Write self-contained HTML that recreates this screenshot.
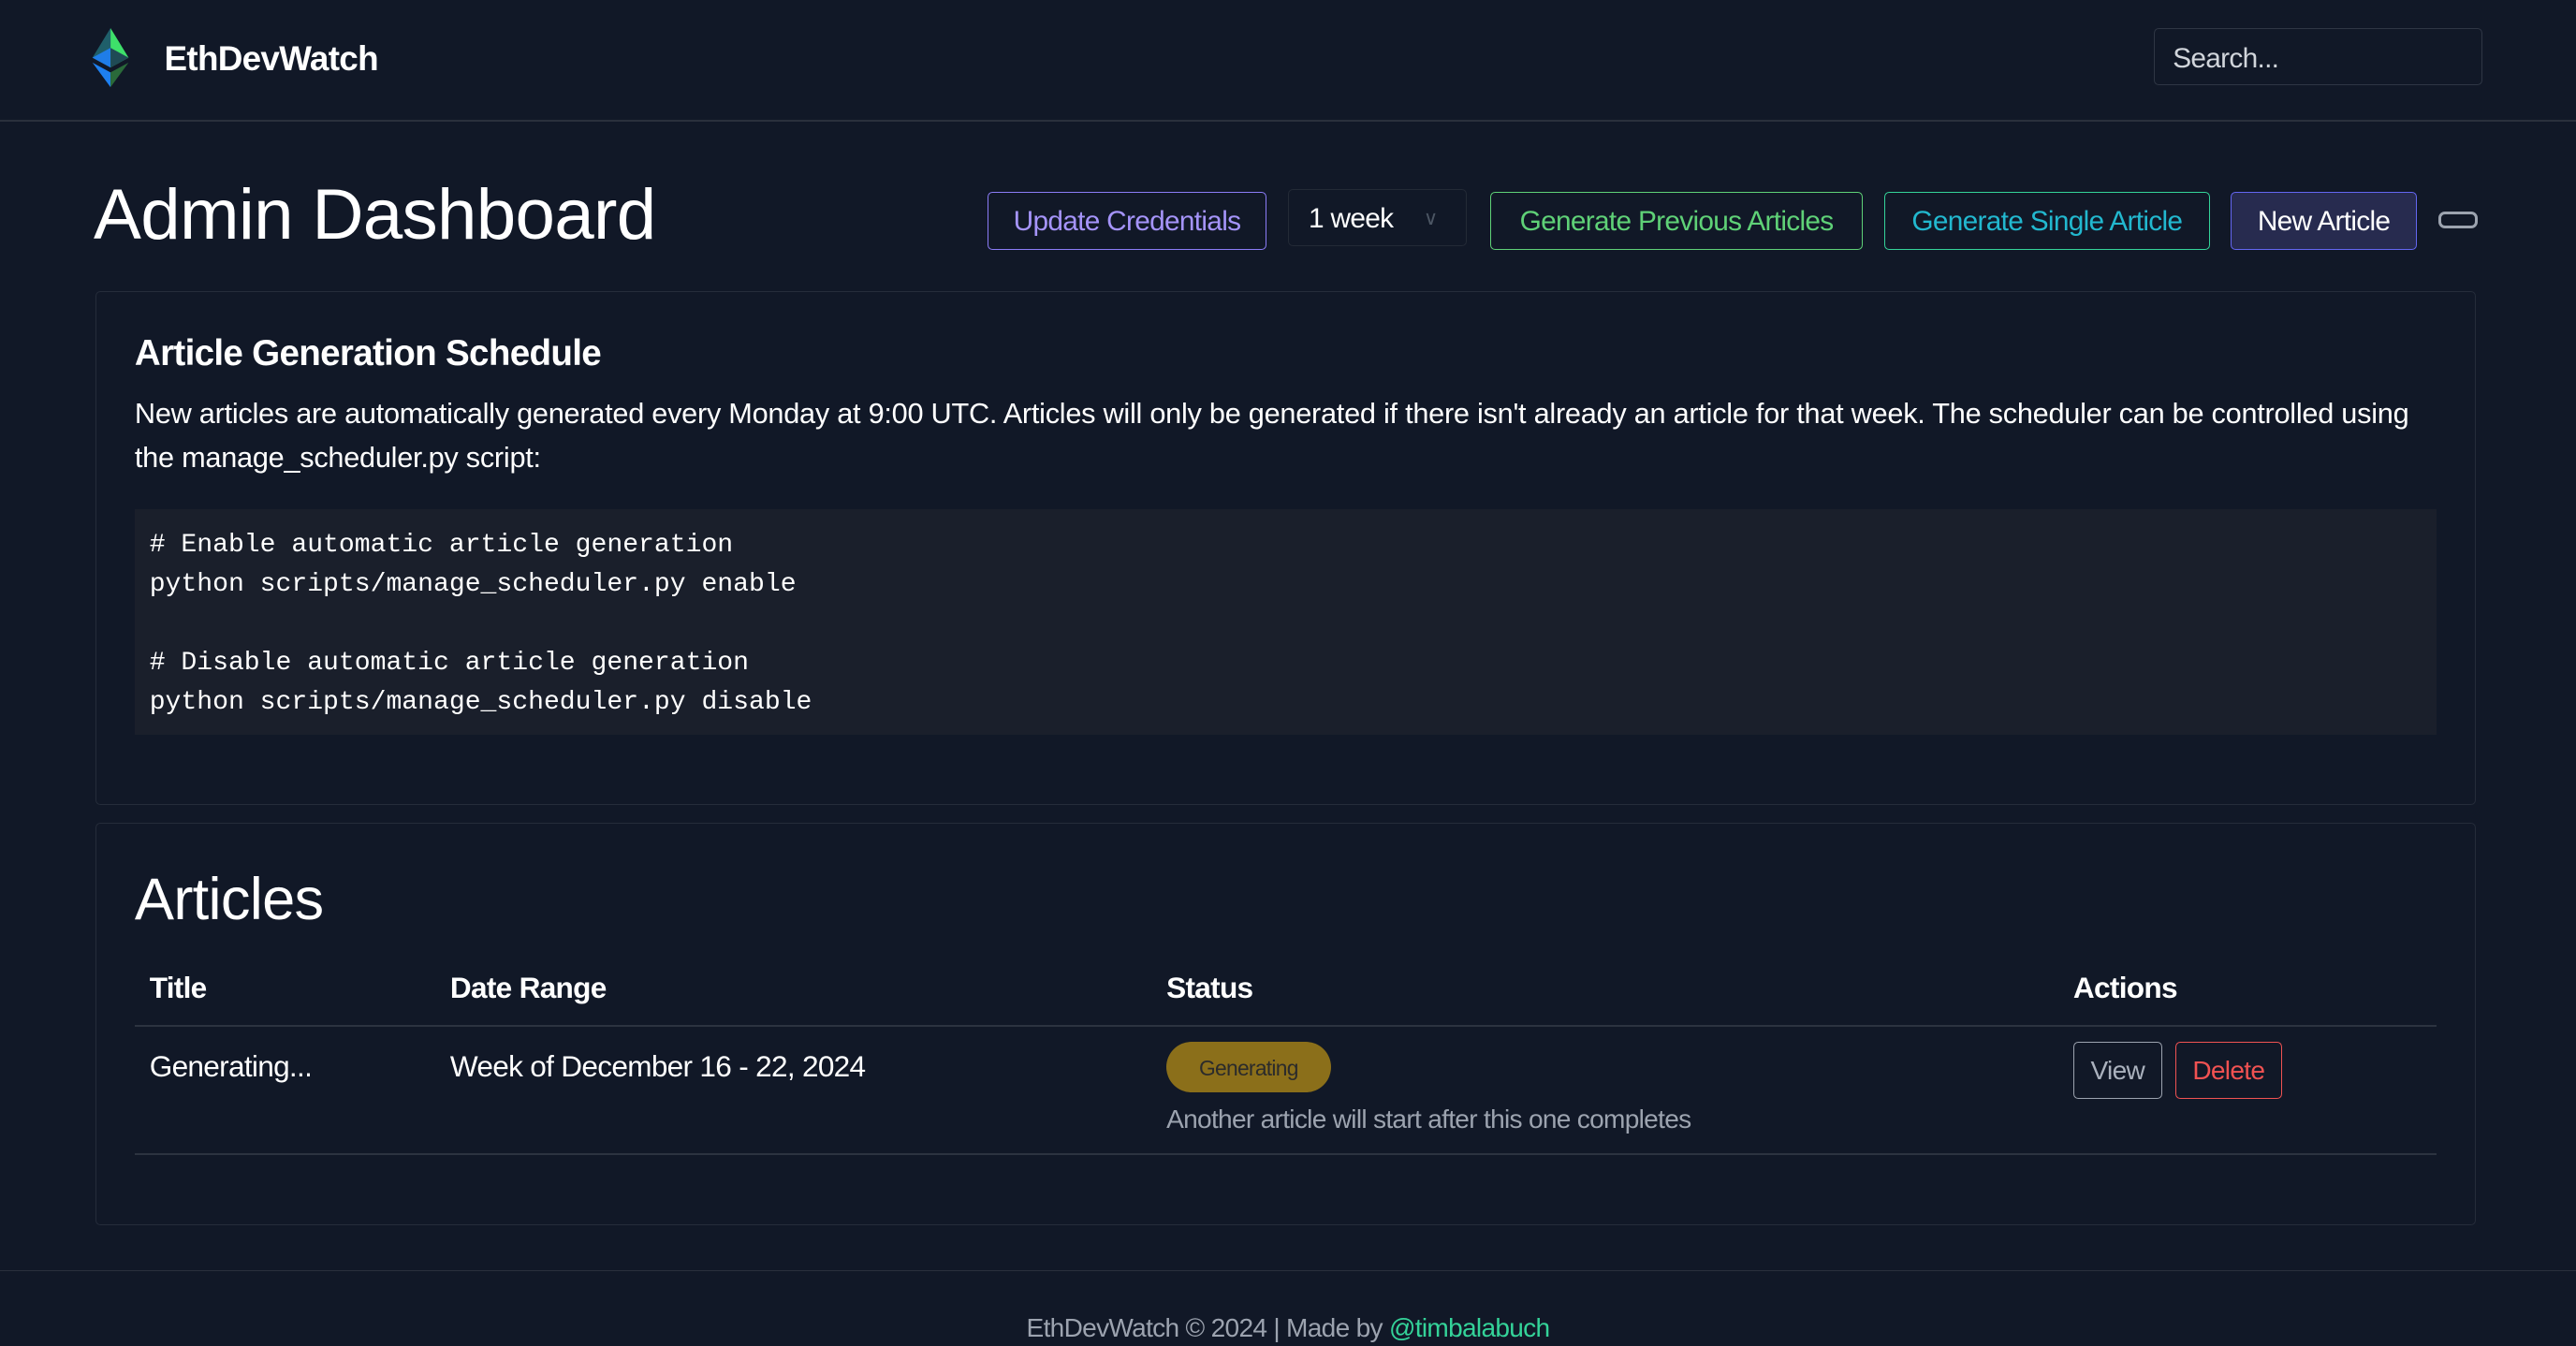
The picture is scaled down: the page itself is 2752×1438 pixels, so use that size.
<!DOCTYPE html>
<html><head><meta charset="utf-8"><style>
*{box-sizing:border-box;margin:0;padding:0}
html,body{background:#111827;width:2752px;height:1438px;overflow:hidden}
#w{zoom:1.7551;width:1568px;height:819px;position:relative;font-family:"Liberation Sans",sans-serif;color:#fff;letter-spacing:-0.4px}
.a{position:absolute;white-space:nowrap}
.btn{position:absolute;top:117px;height:35px;border:1px solid;border-radius:3px;font-size:17px;line-height:35px;text-align:center}
.card{position:absolute;left:58px;width:1449px;border:1px solid #252c3a;border-radius:3px}
.mono{font-family:"Liberation Mono",monospace;font-size:16px;letter-spacing:0}
</style></head><body><div id="w">
<div class="a" style="left:0;top:73px;width:1568px;height:1px;background:#2a303c"></div>
<svg class="a" style="left:55px;top:17px" width="24" height="37" viewBox="0 0 24 37">
<polygon points="12,0 23,18 12,24" fill="#3ee06a"/><polygon points="12,0 1,18 12,24" fill="#1f5f6a"/>
<polygon points="1,18 12,12 12,24" fill="#1f7de8"/><polygon points="23,18 12,12 12,24" fill="#1f4a55"/>
<polygon points="1,21 12,27 12,36" fill="#1e80f0"/><polygon points="23,21 12,27 12,36" fill="#2a6a3a"/>
</svg>
<div class="a" style="left:100px;top:23px;font-size:21px;font-weight:bold;line-height:26px">EthDevWatch</div>
<div class="a" style="left:1311px;top:17px;width:200px;height:35px;border:1px solid #2f3644;border-radius:3px;color:#d1d5db;font-size:17px;line-height:36px;padding-left:11px">Search...</div>
<div class="a" style="left:57px;top:105px;font-size:43.5px;line-height:52px">Admin Dashboard</div>
<div class="btn" style="left:601px;width:170px;border-color:#8b7cf6;color:#a594fa">Update Credentials</div>
<div class="btn" style="left:784px;top:115px;width:109px;border-color:#232a36;color:#fff;text-align:left;padding-left:12px">1 week<span style="position:absolute;left:82px;color:#4b5563;font-size:12px">&#8744;</span></div>
<div class="btn" style="left:907px;width:227px;border-color:#5fd177;color:#5fd177">Generate Previous Articles</div>
<div class="btn" style="left:1147px;width:198px;border-color:#34d399;color:#22b8cf">Generate Single Article</div>
<div class="btn" style="left:1358px;width:113px;border-color:#6366f1;background:#272b4f;color:#fff">New Article</div>
<div class="a" style="left:1484px;top:129px;width:24px;height:10px;border:2px solid #9ca3af;border-radius:4px"></div>
<div class="card" style="top:177px;height:313px"></div>
<div class="a" style="left:82px;top:202px;font-size:22px;font-weight:bold;line-height:26px">Article Generation Schedule</div>
<div class="a" style="left:82px;top:238px;font-size:17.5px;line-height:27px;letter-spacing:-0.15px">New articles are automatically generated every Monday at 9:00 UTC. Articles will only be generated if there isn't already an article for that week. The scheduler can be controlled using<br>the manage_scheduler.py script:</div>
<div class="a" style="left:82px;top:310px;width:1401px;height:137px;background:#1a1f2b"></div>
<div class="a mono" style="left:91px;top:320px;line-height:24px"># Enable automatic article generation<br>python scripts/manage_scheduler.py enable<br><br># Disable automatic article generation<br>python scripts/manage_scheduler.py disable</div>
<div class="card" style="top:501px;height:245px"></div>
<div class="a" style="left:82px;top:527px;font-size:36px;line-height:42px">Articles</div>
<div class="a" style="left:91px;top:590px;font-size:18px;font-weight:bold;line-height:22px">Title</div>
<div class="a" style="left:274px;top:590px;font-size:18px;font-weight:bold;line-height:22px">Date Range</div>
<div class="a" style="left:710px;top:590px;font-size:18px;font-weight:bold;line-height:22px">Status</div>
<div class="a" style="left:1262px;top:590px;font-size:18px;font-weight:bold;line-height:22px">Actions</div>
<div class="a" style="left:82px;top:624px;width:1401px;height:1px;background:#2c3340"></div>
<div class="a" style="left:91px;top:638px;font-size:18px;line-height:22px">Generating...</div>
<div class="a" style="left:274px;top:638px;font-size:18px;line-height:22px">Week of December 16 - 22, 2024</div>
<div class="a" style="left:710px;top:634px;width:100px;height:31px;border-radius:16px;background:#8b6f1a;color:#2b2b2b;font-size:13px;line-height:32px;text-align:center">Generating</div>
<div class="a" style="left:710px;top:671px;font-size:16px;color:#9ca3af;line-height:20px">Another article will start after this one completes</div>
<div class="a" style="left:1262px;top:634px;width:54px;height:35px;border:1px solid #9ca3af;border-radius:3px;color:#aab1bd;font-size:16px;line-height:34px;text-align:center">View</div>
<div class="a" style="left:1324px;top:634px;width:65px;height:35px;border:1px solid #f05252;border-radius:3px;color:#f05252;font-size:16px;line-height:34px;text-align:center">Delete</div>
<div class="a" style="left:82px;top:702px;width:1401px;height:1px;background:#2c3340"></div>
<div class="a" style="left:0;top:773px;width:1568px;height:1px;background:#2a303c"></div>
<div class="a" style="left:0;top:798px;width:1568px;text-align:center;font-size:16px;color:#9ca3af;line-height:20px">EthDevWatch © 2024 | Made by <span style="color:#34d399">@timbalabuch</span></div>
</div></body></html>
